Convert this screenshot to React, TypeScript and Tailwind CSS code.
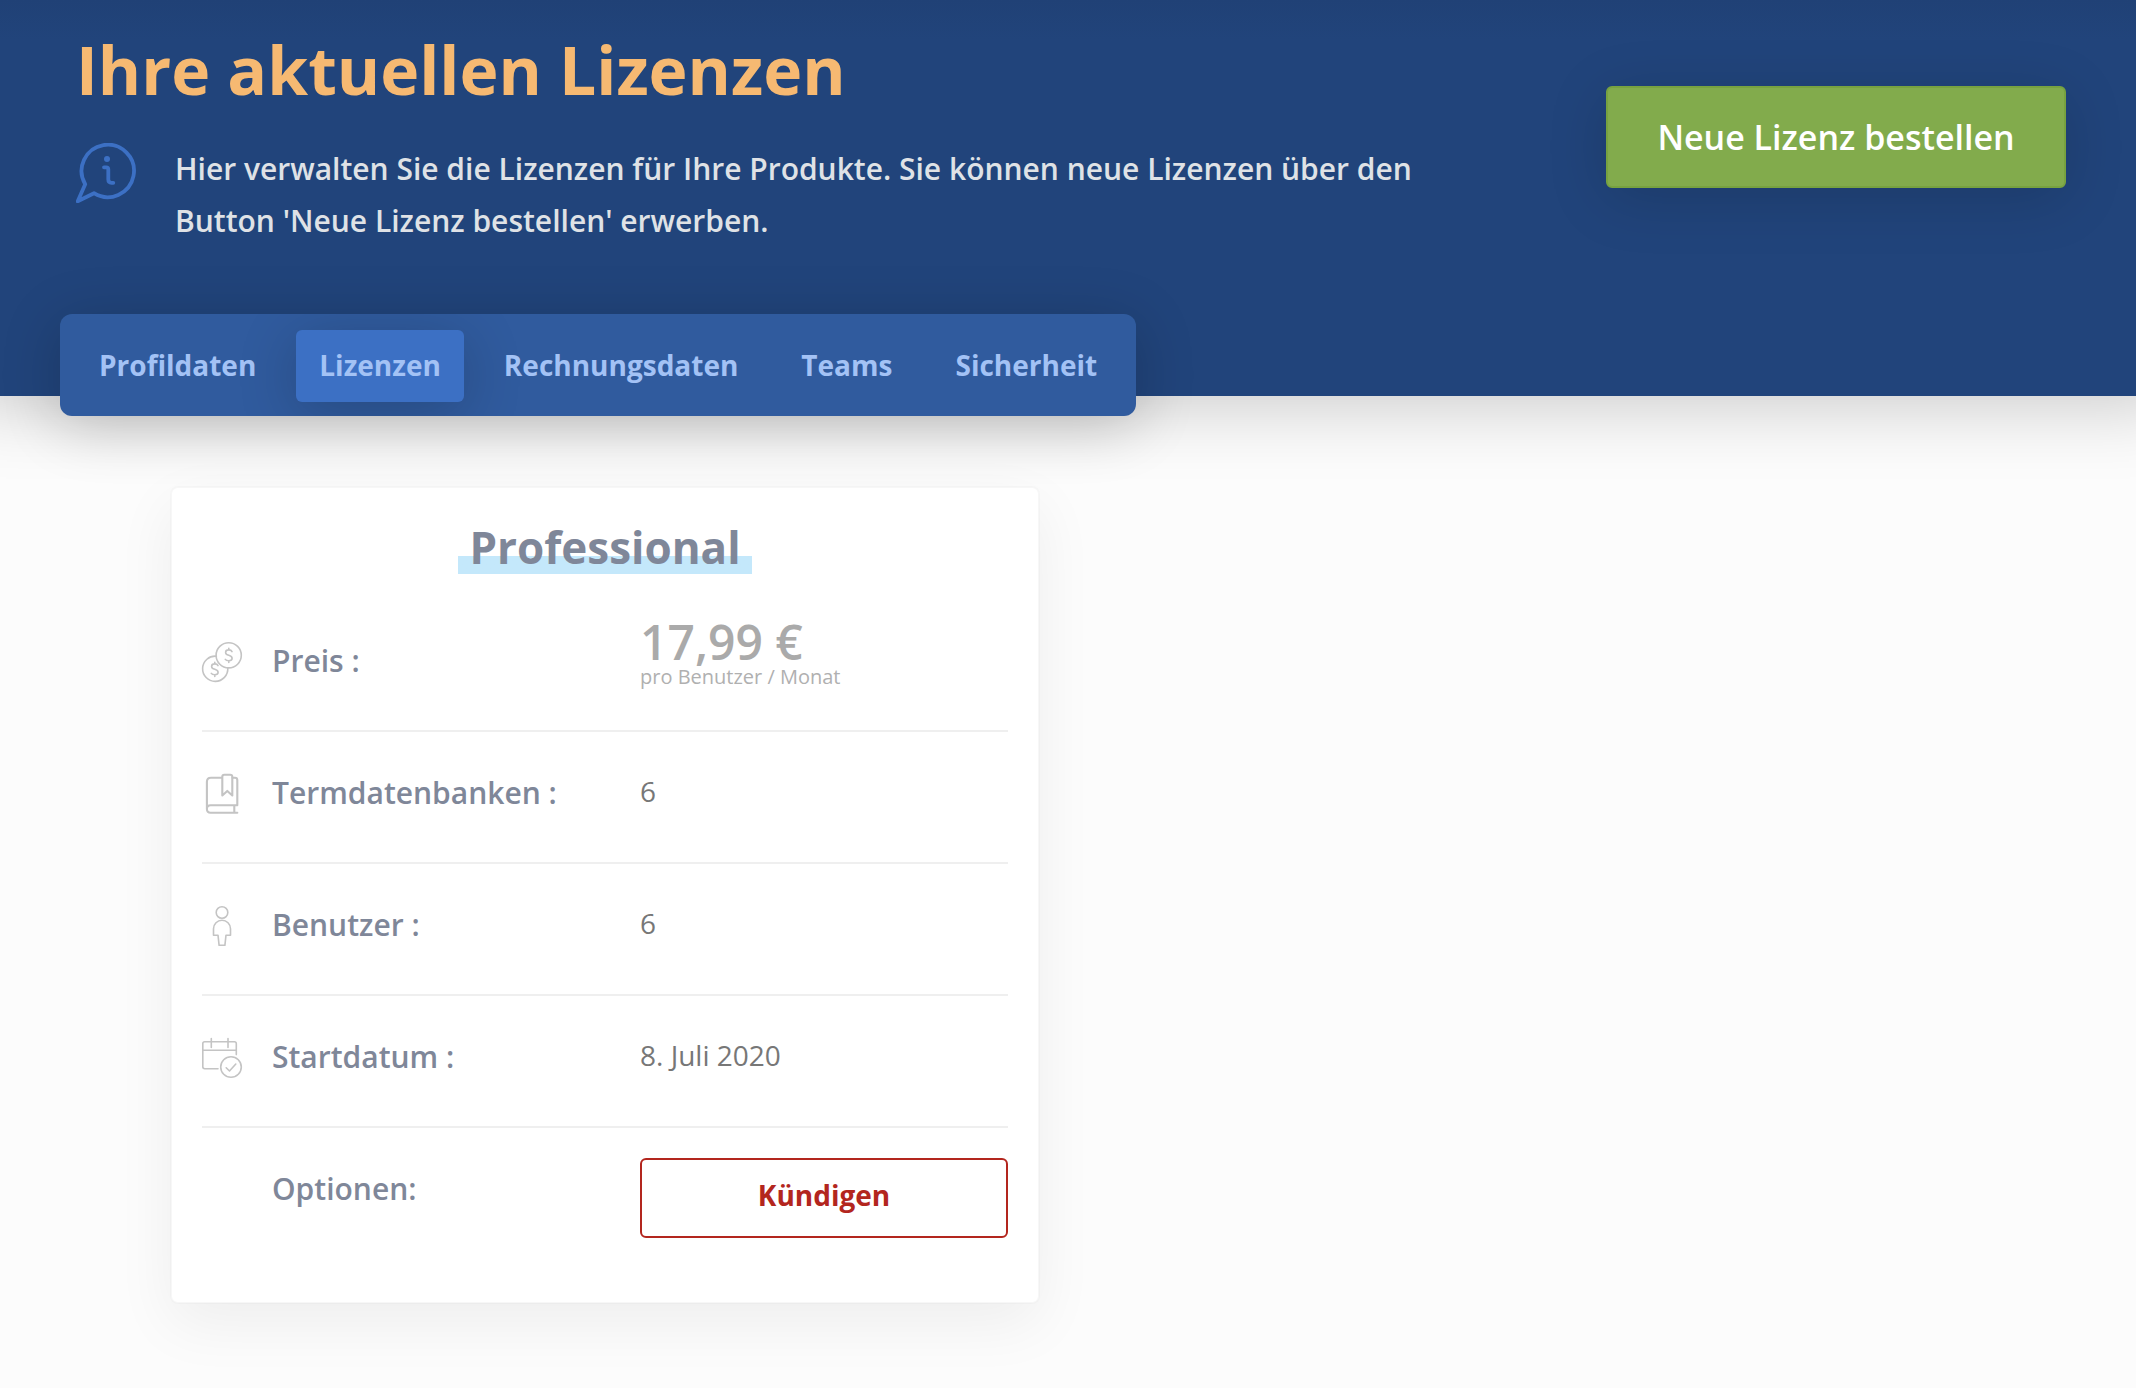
import React from 'react';

interface LicenseRow {
  id: string;
  label: string;
  icon?: React.ReactNode;
  value: React.ReactNode;
}

const TABS = ['Profildaten', 'Lizenzen', 'Rechnungsdaten', 'Teams', 'Sicherheit'];

const iconProps = {
  viewBox: '0 0 40 40',
  fill: 'none',
  stroke: 'currentColor',
  strokeWidth: 1.6,
  strokeLinecap: 'round' as const,
  strokeLinejoin: 'round' as const,
  className: 'size-10 overflow-visible',
  'aria-hidden': true,
};

const InfoIcon = () => (
  <svg
    viewBox="0 0 60 60"
    fill="none"
    stroke="currentColor"
    strokeWidth="3.8"
    strokeLinecap="round"
    strokeLinejoin="round"
    className="size-15 shrink-0 text-[#3c70c4]"
    aria-hidden="true"
  >
    <path d="M9.2 41.2A26.2 26.2 0 1 1 18 50.2L1.7 58.3Z" />
    <circle cx="31" cy="16" r="3" fill="currentColor" stroke="none" />
    <path d="M28 24.3h2.2q2.1 0 2.1 2.1v10.2q0 3.2 3.2 3.2h1.8" />
  </svg>
);

const CoinsIcon = () => (
  <svg {...iconProps}>
    <circle cx="26.7" cy="13.3" r="12.6" />
    <path d="M14.4 14.2A12.6 12.6 0 1 0 25.8 26" />
    <path d="M30 9.6q-.8-1.7-3.2-1.7-3.2 0-3.2 2.5 0 1.9 3.2 2.8 3.3.9 3.3 3 0 2.5-3.3 2.5-2.6 0-3.5-1.3M26.8 6.2v1.7M26.8 18.7v1.8" />
    <path d="M16 23.6q-.8-1.7-3.2-1.7-3.2 0-3.2 2.5 0 1.9 3.2 2.8 3.3.9 3.3 3 0 2.5-3.3 2.5-2.6 0-3.5-1.3M12.8 20.2v1.7M12.8 32.7v1.8" />
  </svg>
);

const BookIcon = () => (
  <svg {...iconProps} strokeWidth={2.1}>
    <path d="M20 3.7H9Q4.9 3.7 4.9 7.8V35q0 3.7 3.7 3.7H35.3M35.3 31.3H8.6Q4.9 31.3 4.9 35M30.5 3.7H33q2.3 0 2.3 2.3v25.3M32.3 31.3v7.4" />
    <path d="M20.3 2.8V21.5l5-4.6 5 4.6V2.8Q30.3.8 28.3.8H22.3Q20.3.8 20.3 2.8Z" />
  </svg>
);

const PersonIcon = () => (
  <svg {...iconProps}>
    <circle cx="20" cy="6.5" r="5.8" />
    <path d="M11.5 29.2V22.8a8.5 8.5 0 0 1 17 0V29.2H24L22.9 39.3H17.1L16 29.2Z" />
  </svg>
);

const CalendarIcon = () => (
  <svg {...iconProps}>
    <path d="M16 30.7H2.7Q.8 30.7.8 28.8V5.6Q.8 3.7 2.7 3.7H32.4Q34.3 3.7 34.3 5.6V16.6M.8 12.3H34.3M9.3.5V9.5M26 .5V9.5" />
    <circle cx="29" cy="29" r="10.3" />
    <path d="M24.2 29.8l3.3 3.2 6.3-7" />
  </svg>
);

const ROWS: LicenseRow[] = [
  {
    id: 'preis',
    label: 'Preis :',
    icon: <CoinsIcon />,
    value: (
      <>
        <div className="text-[48px] leading-6 font-semibold text-[#aaaaaa]">17,99 €</div>
        <div className="text-[20px] leading-[46px] text-[#b0b0b0]">pro Benutzer / Monat</div>
      </>
    ),
  },
  { id: 'termdatenbanken', label: 'Termdatenbanken :', icon: <BookIcon />, value: '6' },
  { id: 'benutzer', label: 'Benutzer :', icon: <PersonIcon />, value: '6' },
  { id: 'startdatum', label: 'Startdatum :', icon: <CalendarIcon />, value: '8. Juli 2020' },
  {
    id: 'optionen',
    label: 'Optionen:',
    value: (
      <button
        type="button"
        className="block h-20 w-full rounded-md border-2 border-[#b3261e] pb-1.5 text-[28px] leading-10 font-bold text-[#b3261e]"
      >
        Kündigen
      </button>
    ),
  },
];

const Header = () => (
  <header className="flex flex-col bg-linear-to-b from-[#204176] to-[#21447b] to-[40px] px-[60px] pt-7 shadow-[0_-30px_70px_40px_rgba(0,0,0,0.2)]">
    <div className="flex items-start justify-between pr-[10px] pl-4">
      <div className="max-w-[1360px]">
        <h1 className="text-[66px] leading-[82px] font-bold text-[#f6b972]">Ihre aktuellen Lizenzen</h1>
        <div className="mt-[33px] flex items-start gap-[39px]">
          <InfoIcon />
          <p className="text-[30px] leading-[52px] font-semibold text-[#dfe2e6]">
            Hier verwalten Sie die Lizenzen für Ihre Produkte. Sie können neue Lizenzen über den Button 'Neue Lizenz
            bestellen' erwerben.
          </p>
        </div>
      </div>
      <button
        type="button"
        className="mt-[58px] h-[102px] w-[460px] shrink-0 rounded-md border-2 border-[#77a240] bg-[#82ab4c] text-[34px] font-semibold text-white shadow-[0_10px_60px_rgba(0,0,0,0.15)]"
      >
        Neue Lizenz bestellen
      </button>
    </div>

    <nav className="mt-[67px] -mb-5 flex w-fit gap-[17px] overflow-hidden rounded-xl bg-[#305b9e] px-4 pt-4 pb-[14px] shadow-[0_10px_60px_rgba(0,0,0,0.2)]">
      {TABS.map(tab => (
        <a
          key={tab}
          href={`#${tab.toLowerCase()}`}
          className={`rounded-md px-[23px] pb-0.5 text-[28px] leading-[70px] font-bold text-[#a3c2f5] ${
            tab === 'Lizenzen' ? 'bg-[#3c70c4] shadow-[0_10px_60px_rgba(0,0,0,0.2)]' : ''
          }`}
        >
          {tab}
        </a>
      ))}
    </nav>
  </header>
);

const LicenseCard = () => (
  <section className="rounded-lg border-2 border-black/2 bg-white bg-clip-padding px-[30px] pt-8 pb-[34px] shadow-[0_20px_60px_rgba(0,0,0,0.06)]">
    <h2 className="text-center text-[44px] leading-[54px] font-bold text-[#7f8799]">
      <span className="inline-block bg-linear-to-t from-[#c4e8fb] from-[18px] to-transparent to-[18px] px-[11px]">
        Professional
      </span>
    </h2>
    <dl className="mt-[26px]">
      {ROWS.map(row => (
        <div key={row.id} className="flex border-b-2 border-[#efefef] py-[30px] last:border-b-0">
          <dt className="flex flex-1 gap-[30px] text-[30px] leading-[62px] font-semibold text-[#7f8799]">
            <span className="flex h-16 w-10 items-center text-[#c4c4c4]">{row.icon}</span>
            {row.label}
          </dt>
          <dd className="min-h-[70px] w-[368px] text-[28px] leading-[58px] text-[#777777]">{row.value}</dd>
        </div>
      ))}
    </dl>
  </section>
);

const App: React.FC = () => {
  return (
    <div className="min-h-screen bg-[#fcfcfc] font-['Open_Sans',sans-serif]">
      <Header />
      <main className="grid grid-cols-2 gap-14 px-[170px] pt-[90px] pb-20">
        <LicenseCard />
      </main>
    </div>
  );
};

export default App;
